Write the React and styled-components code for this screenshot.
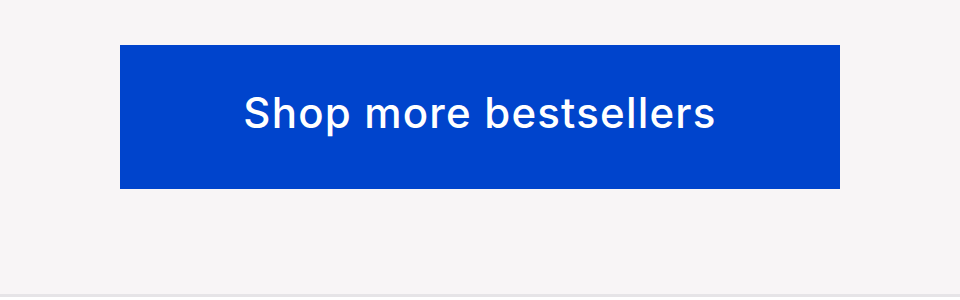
import styled, { createGlobalStyle } from "styled-components";

const GlobalStyle = createGlobalStyle`
  body {
    margin: 0;
    background: #ffffff;
    font-family: Inter, "Noto Sans", sans-serif;
  }
`;

const Section = styled.section`
  height: 297px;
  background: #f8f5f6;
  border-bottom: 3px solid #e6e4e7;
  padding: 45px 120px 0;
  box-sizing: border-box;
`;

const ShopButton = styled.a`
  display: flex;
  justify-content: center;
  align-items: center;
  height: 144px;
  background: #0044cc;
  color: #ffffff;
  font-size: 42px;
  font-weight: 500;
  letter-spacing: 1.2px;
  text-decoration: none;
  padding-bottom: 10px;
  box-sizing: border-box;
`;

function App() {
  return (
    <>
      <GlobalStyle />
      <Section>
        <ShopButton href="#">Shop more bestsellers</ShopButton>
      </Section>
    </>
  );
}

export default App;
